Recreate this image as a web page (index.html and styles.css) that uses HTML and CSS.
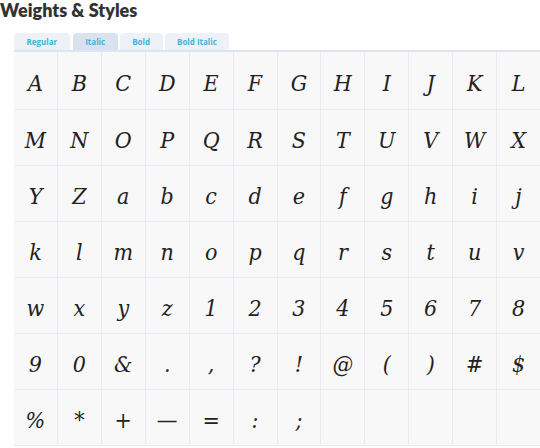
FILE: index.html
```html
<!DOCTYPE html>
<html>
<head>
<meta charset="utf-8">
<link rel="stylesheet" href="styles.css">
</head>
<body>
<h2 class="title">Weights &amp; Styles</h2>
<div class="tabs">
  <span class="tab">Regular</span>
  <span class="tab active">Italic</span>
  <span class="tab">Bold</span>
  <span class="tab">Bold Italic</span>
</div>
<div class="grid">
  <div class="cell">A</div><div class="cell">B</div><div class="cell">C</div><div class="cell">D</div><div class="cell">E</div><div class="cell">F</div><div class="cell">G</div><div class="cell">H</div><div class="cell">I</div><div class="cell">J</div><div class="cell">K</div><div class="cell">L</div>
  <div class="cell">M</div><div class="cell">N</div><div class="cell">O</div><div class="cell">P</div><div class="cell">Q</div><div class="cell">R</div><div class="cell">S</div><div class="cell">T</div><div class="cell">U</div><div class="cell">V</div><div class="cell">W</div><div class="cell">X</div>
  <div class="cell">Y</div><div class="cell">Z</div><div class="cell">a</div><div class="cell">b</div><div class="cell">c</div><div class="cell">d</div><div class="cell">e</div><div class="cell">f</div><div class="cell">g</div><div class="cell">h</div><div class="cell">i</div><div class="cell">j</div>
  <div class="cell">k</div><div class="cell">l</div><div class="cell">m</div><div class="cell">n</div><div class="cell">o</div><div class="cell">p</div><div class="cell">q</div><div class="cell">r</div><div class="cell">s</div><div class="cell">t</div><div class="cell">u</div><div class="cell">v</div>
  <div class="cell">w</div><div class="cell">x</div><div class="cell">y</div><div class="cell">z</div><div class="cell">1</div><div class="cell">2</div><div class="cell">3</div><div class="cell">4</div><div class="cell">5</div><div class="cell">6</div><div class="cell">7</div><div class="cell">8</div>
  <div class="cell">9</div><div class="cell">0</div><div class="cell">&amp;</div><div class="cell">.</div><div class="cell">,</div><div class="cell">?</div><div class="cell">!</div><div class="cell">@</div><div class="cell">(</div><div class="cell">)</div><div class="cell">#</div><div class="cell">$</div>
  <div class="cell">%</div><div class="cell">*</div><div class="cell">+</div><div class="cell">—</div><div class="cell">=</div><div class="cell">:</div><div class="cell">;</div><div class="cell"></div><div class="cell"></div><div class="cell"></div><div class="cell"></div><div class="cell"></div>
</div>
</body>
</html>
```
FILE: styles.css
```css
html, body {
  margin: 0;
  padding: 0;
  background: #ffffff;
}
body {
  width: 540px;
  height: 448px;
  overflow: hidden;
}
.title {
  margin: 0;
  padding: 0;
  height: 32px;
  line-height: 22px;
  font-family: "Lato", "Open Sans", sans-serif;
  font-weight: 800;
  font-size: 18px;
  color: #333333;
  margin-top: -1px;
  margin-bottom: 1px;
}
.tabs {
  display: flex;
  gap: 2px;
  margin-left: 14px;
  height: 18px;
  align-items: flex-end;
}
.tab {
  display: block;
  height: 17px;
  line-height: 18px;
  padding: 0 12.5px;
  background: #eef1f7;
  border-radius: 4px 4px 0 0;
  font-family: "Open Sans", sans-serif;
  font-weight: 700;
  font-size: 8px;
  color: #3fb4da;
}
.tab:first-child { margin-right: 1px; }
.tab.active { background: #dbe2ef; }
.grid {
  margin-left: 14px;
  border-top: 2px solid #dde5f2;
  display: grid;
  grid-template-columns: repeat(12, 1fr);
  grid-template-rows: 57px repeat(6, 55px);
  gap: 1px;
  background: #e8ebf3;
  border-bottom: 1px solid #e8ebf3;
}
.cell {
  background: #f8f8f8;
  display: flex;
  align-items: center;
  justify-content: center;
  font-family: "DejaVu Serif", serif;
  font-stretch: condensed;
  font-style: italic;
  font-size: 23px;
  color: #222222;
  padding-top: 5px;
  box-sizing: border-box;
}
```
